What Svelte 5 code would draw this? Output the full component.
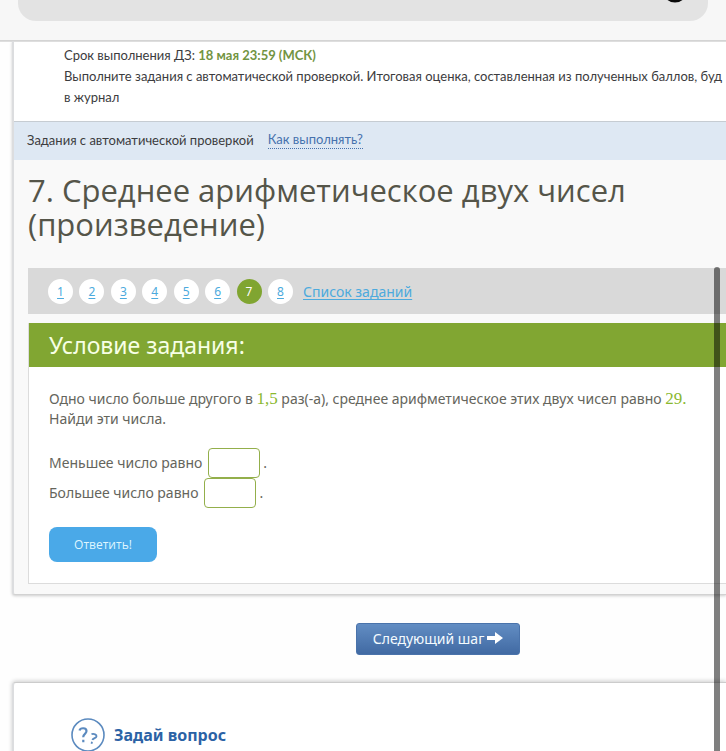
<script>
  const steps = [1, 2, 3, 4, 5, 6, 7, 8];
  const current = 7;
  let smaller = $state('');
  let larger = $state('');
</script>

<div class="page">
  <header class="browser">
    <div class="address">
      <svg class="reload" width="30" height="30" viewBox="0 0 30 30" aria-hidden="true">
        <circle cx="15" cy="15" r="11" fill="none" stroke="#0a0a0a" stroke-width="3" />
      </svg>
    </div>
  </header>

  <main>
    <section class="panel lesson">
      <div class="info">
        <p class="type"><b>Домашнее задание на неделю</b></p>
        <p>Срок выполнения ДЗ: <b class="deadline">18 мая 23:59 (МСК)</b></p>
        <p>Выполните задания с автоматической проверкой. Итоговая оценка, составленная из полученных баллов, буд<br />в журнал</p>
      </div>
      <div class="mode">
        <span>Задания с автоматической проверкой</span>
        <a href="#help">Как выполнять?</a>
      </div>
      <div class="work">
        <h1>7. Среднее арифметическое двух чисел<br />(произведение)</h1>
        <nav>
          <div class="steps">
            {#each steps as step}
              <a class="step" class:current={step === current} href="#task-{step}">{step}</a>
            {/each}
          </div>
          <a class="list" href="#list">Список заданий</a>
        </nav>
        <article>
          <h2>Условие задания:</h2>
          <form onsubmit={(e) => e.preventDefault()}>
            <p>Одно число больше другого в <span class="num">1,5</span> раз(-а), среднее арифметическое этих двух чисел равно <span class="num">29.</span><br />Найди эти числа.</p>
            <div class="fields">
              <div class="field">
                <label for="smaller">Меньшее число равно</label>
                <input id="smaller" type="text" bind:value={smaller} />
                <span>.</span>
              </div>
              <div class="field">
                <label for="larger">Большее число равно</label>
                <input id="larger" type="text" bind:value={larger} />
                <span>.</span>
              </div>
            </div>
            <button class="answer">Ответить!</button>
          </form>
        </article>
      </div>
    </section>

    <div class="next-row">
      <button class="next" type="button">
        Следующий шаг
        <svg width="16" height="12" viewBox="0 0 16 12" aria-hidden="true"><path d="M0 4h8V0l8 6-8 6V8H0z" fill="#fff" /></svg>
      </button>
    </div>

    <section class="panel ask">
      <svg width="34" height="34" viewBox="0 0 34 34" fill="none" stroke="#5b8abf" aria-hidden="true">
        <circle cx="17" cy="17" r="16" stroke-width="1.6" />
        <path d="M8.500 12.500c.8-3 7-3.200 7 .6 0 3-3.400 2.600-3.300 6.200M12.300 21.800v2.500" stroke-width="2.200" />
        <path d="M20.500 16.200c2.500-.8 5.400.3 5 2.300-.4 1.900-3.400 1.300-4.100 3.600M21 23.800l-.5 1.900" stroke-width="1.800" />
      </svg>
      <h3>Задай вопрос</h3>
    </section>
  </main>
  <div class="scroll"></div>
</div>

<style>
  :global(body) { margin: 0; background: #fefefe; }
  .page {
    position: relative;
    height: 100vh;
    overflow: hidden;
    display: flex;
    flex-direction: column;
    font-family: "Noto Sans", "Open Sans", sans-serif;
    color: #3c3c3e;
  }
  .page * { box-sizing: border-box; }
  p, h1, h2, h3 { margin: 0; font-weight: 400; }
  .browser {
    flex: none;
    height: 41px;
    padding: 0 18px;
    background: #f7f7f7;
    border-bottom: 1px solid #d4d4d4;
  }
  .address {
    position: relative;
    height: 21px;
    background: #e3e3e3;
    border-radius: 0 0 18px 18px;
  }
  .reload { position: absolute; right: 18px; bottom: 16px; }
  main {
    flex: 1;
    min-height: 0;
    overflow: hidden;
    padding-left: 12px;
    display: flex;
    flex-direction: column;
    background: linear-gradient(#dedede 1px, transparent 1px);
  }
  .panel { flex: none; border-left: 2px solid #dcdddf; }
  .lesson {
    background: #f9f9f9;
    border-bottom: 1px solid #d2d2d2;
    border-bottom-left-radius: 3px;
    box-shadow: 0 1px 3px #ccc;
  }
  .info {
    height: 81px;
    padding-left: 50px;
    background: linear-gradient(#dedede 1px, #fff 1px);
    border-bottom: 1px solid #c6ccd2;
    font-family: Lato, sans-serif;
    font-size: 13px;
    line-height: 21px;
    white-space: nowrap;
    overflow: hidden;
  }
  .type { margin-top: -17px; }
  .deadline { color: #729442; }
  .mode {
    height: 38px;
    padding: 0 0 3px 13px;
    display: flex;
    align-items: center;
    gap: 14px;
    background: #dee8f3;
    font-family: Lato, sans-serif;
    font-size: 13px;
    line-height: 18px;
  }
  .mode a { color: #4672ae; text-decoration: none; border-bottom: 1px dotted #4672ae; }
  .work { padding: 13px 0 10px 14px; }
  h1 { font-family: "Open Sans", sans-serif; font-size: 31px; line-height: 34px; color: #555549; white-space: nowrap; }
  nav {
    margin-top: 27px;
    height: 46px;
    padding-left: 20px;
    display: flex;
    align-items: center;
    gap: 10px;
    background: #d9d9d9;
  }
  .steps { display: flex; justify-content: space-between; width: 245px; }
  nav a { color: #4caadd; text-underline-offset: 2px; }
  .step {
    width: 25px;
    height: 25px;
    border-radius: 50%;
    background: #fff;
    text-align: center;
    line-height: 25px;
    font-size: 12px;
  }
  .step.current { background: #80a531; color: #fff; text-decoration: none; }
  .list { font-size: 14px; }
  article { margin-top: 9px; background: #fff; border: 1px solid #dcdcdc; border-right: 0; border-top: 0; }
  h2 {
    height: 44px;
    padding-left: 20px;
    background: #81a632;
    color: #f7ffe5;
    font-size: 23px;
    line-height: 44px;
  }
  form { padding: 22px 0 21px 20px; font-size: 14px; line-height: 20px; color: #65655c; white-space: nowrap; }
  .num { color: #8ab82f; font-family: "Liberation Serif", serif; font-size: 17px; line-height: 18px; }
  .fields { margin: 19px 0 19px; }
  .field { display: flex; align-items: center; }
  input {
    width: 52px;
    height: 30px;
    margin: 0 3px 0 6px;
    border: 1px solid #93af4b;
    border-radius: 4px;
    background: #fff;
    font: inherit;
    padding: 0 4px;
  }
  .answer {
    display: block;
    width: 108px;
    height: 35px;
    border: 0;
    border-radius: 8px;
    background: #4aa9e8;
    color: #dff6ff;
    font: 12px "Open Sans", sans-serif;
  }
  .next-row { flex: none; padding: 28px 0 27px; display: flex; justify-content: center; }
  .next {
    margin-right: -138px;
    height: 32px;
    padding: 0 16px 2px;
    display: flex;
    align-items: center;
    gap: 3px;
    border: 1px solid #4a73ab;
    border-radius: 3px;
    background: linear-gradient(#628dc3, #416aa3);
    color: #f4fbff;
    font: 14px "Noto Sans", sans-serif;
  }
  .ask {
    flex: 1 0 auto;
    padding: 35px 0 20px 57px;
    display: flex;
    gap: 9px;
    align-items: flex-start;
    background: #fff;
    border-top: 1px solid #ccc;
    border-top-left-radius: 4px;
    box-shadow: 0 -1px 4px #ccc;
  }
  h3 { font-size: 16px; line-height: 34px; font-weight: 700; color: #2b62a5; }
  .scroll {
    position: absolute;
    top: 267px;
    bottom: -10px;
    right: 6px;
    width: 6px;
    border-radius: 3px;
    background: rgba(0, 0, 0, 0.5);
  }
</style>
